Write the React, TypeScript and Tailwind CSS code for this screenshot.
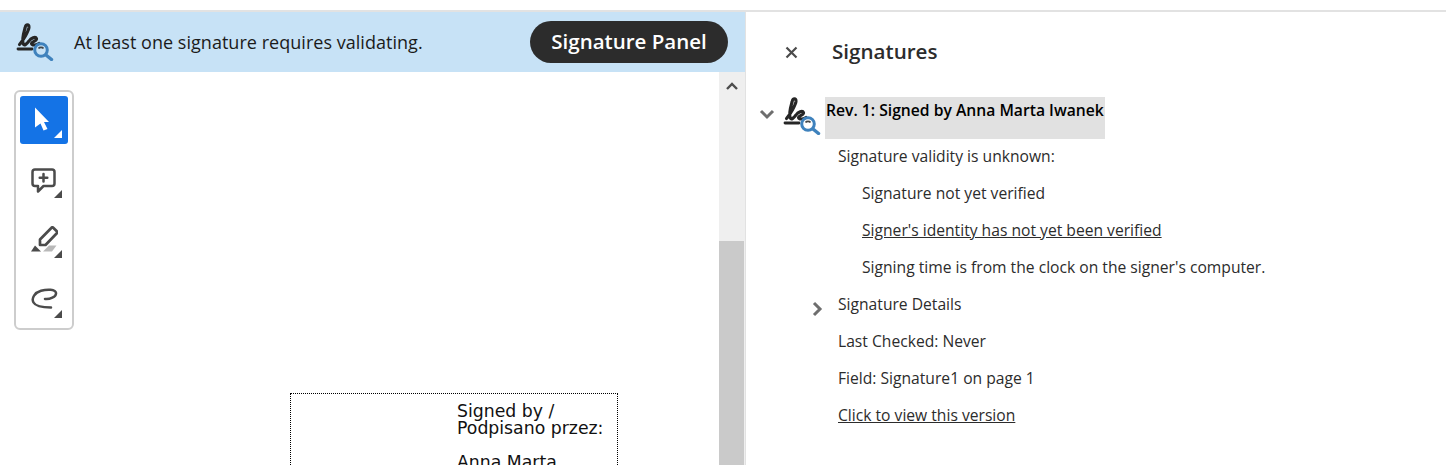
const SigIcon = ({ className }: { className: string }) => (
  <svg viewBox="0 0 38 38" className={className} fill="none">
    <path d="M3.500 21.500 C7.500 17 12.500 8 13 4.500 C13.300 0.800 9.800 0.800 9.200 4.500 C8 9 5.500 16 7.200 21 C8.200 23.500 11 20.500 13 18 C15 15 19.500 13 20.500 15.500 C21.300 18 16 18.500 15.500 20.500 C15.800 22.500 20 22.500 23 20.500" stroke="#262626" strokeWidth="3.100" strokeLinecap="round" strokeLinejoin="round" />
    <path d="M2 26 H16" stroke="#262626" strokeWidth="2.800" strokeLinecap="round" />
    <circle cx="25" cy="27" r="6.300" stroke="#3f82bd" strokeWidth="3" />
    <path d="M30 32 L35.500 36.500" stroke="#3f82bd" strokeWidth="3.400" strokeLinecap="round" />
    <path d="M22.500 25.500 C23.500 24 26.500 24 27.500 25.500" stroke="#444" strokeWidth="1.600" />
  </svg>
);

const Corner = ({ color }: { color: string }) => (
  <svg width="8" height="8" viewBox="0 0 8 8" className="absolute right-[6px] bottom-[6px]">
    <path d="M8 0V8H0Z" fill={color} />
  </svg>
);

const Tool = ({ active, children }: { active?: boolean; children: React.ReactNode }) => (
  <div className={`relative flex h-[48px] w-[48px] items-center justify-center rounded-[3px] ${active ? "bg-[#1473e6]" : ""}`}>
    {children}
    <Corner color={active ? "#ffffff" : "#4b4b4b"} />
  </div>
);

const Row = ({ children, className = "" }: { children: React.ReactNode; className?: string }) => (
  <div className={`flex h-[37px] items-center text-[15.650px] text-[#2c2c2c] ${className}`}>{children}</div>
);

export default function App() {
  return (
    <div className="flex h-[465px] w-[1446px] flex-col overflow-hidden bg-white font-['Open_Sans','Noto_Sans',sans-serif]">
      <div className="h-[10px] shrink-0" />
      <div className="h-[2px] shrink-0 bg-[#e2e2e2]" />
      <div className="flex min-h-0 flex-1">
        <div className="flex w-[745px] shrink-0 flex-col">
          <div className="flex h-[60px] shrink-0 items-center bg-[#c7e2f6] pl-[16px] pr-[17px]">
            <SigIcon className="h-[38px] w-[38px]" />
            <span className="ml-[20px] flex-1 text-[18px] tracking-[0.03px] text-[#1b1b1b]">At least one signature requires validating.</span>
            <div className="flex h-[42px] w-[198px] items-center justify-center rounded-full bg-[#2c2c2c] pb-[1px] text-[20.500px] font-semibold text-white">Signature Panel</div>
          </div>
          <div className="flex min-h-0 flex-1">
            <div className="relative min-w-0 flex-1 overflow-hidden pl-[14px] pt-[18px]">
              <div className="flex w-[60px] flex-col gap-[12px] rounded-[6px] border-2 border-[#cdcdcd] bg-white p-[4px]">
                <Tool active>
                  <svg width="16" height="24" viewBox="0 0 16 24" className="-ml-[4px] -mt-[2px]"><path d="M1 0.500 L15 15 H10 L13.500 22 L9.500 23.500 L6.500 16.500 L1 20.500Z" fill="#fff" /></svg>
                </Tool>
                <Tool>
                  <svg width="25" height="25" viewBox="0 0 25 25" fill="none" stroke="#4b4b4b" strokeWidth="2.500" strokeLinejoin="round" strokeLinecap="round" className="-ml-[1px]">
                    <path d="M4 1.500 H21 Q23.500 1.500 23.500 4 V15.500 Q23.500 18 21 18 H12.500 L7 23.500 V18 H4 Q1.500 18 1.500 15.500 V4 Q1.500 1.500 4 1.500Z" />
                    <path d="M12.500 6 V13.500 M8.700 9.700 H16.300" />
                  </svg>
                </Tool>
                <Tool>
                  <svg width="28" height="26" viewBox="0 0 28 26" fill="none" className="-ml-[1px] -mt-[2px]">
                    <path d="M23 1.500 L26.800 5.300 Q27.600 6.300 26.800 7.300 L15.500 19 H10 V13.500 L21.300 2 Q22.200 1 23 1.500Z" stroke="#4b4b4b" strokeWidth="2.700" strokeLinejoin="round" />
                    <path d="M1 25.500 L5 19.500 L11 25.500Z" fill="#4b4b4b" />
                    <path d="M13 25.500 L19 19.500 H26.500 L22 25.500Z" fill="#b9b9b9" />
                  </svg>
                </Tool>
                <Tool>
                  <svg width="27" height="21" viewBox="0 0 27 21" fill="none" stroke="#4b4b4b" strokeWidth="2.500" strokeLinecap="round" className="-mt-[4px]">
                    <path d="M20 19.500 C15 19.500 5 19 2.500 14.500 C0 10 4 4.500 10 2.800 C16 1 24.500 1 25 5 C25.500 9 18.500 11.500 14 11" />
                  </svg>
                </Tool>
              </div>
              <div className="absolute left-[290px] top-[321px] h-[200px] w-[328px] border border-dotted border-black pl-[166px] pt-[9px] font-['DejaVu_Sans',sans-serif] text-[17.300px] leading-[17px] text-[#111]">
                <div>Signed by /</div>
                <div>Podpisano przez:</div>
                <div className="mt-[17px]">Anna Marta</div>
              </div>
            </div>
            <div className="flex w-[26px] shrink-0 flex-col bg-[#efefef] pr-[1px]">
              <div className="flex h-[169px] items-start justify-center pt-[9px]">
                <svg width="14" height="10" viewBox="0 0 14 10" fill="none"><path d="M2 8 L7 3 L12 8" stroke="#4d4d4d" strokeWidth="2.400" /></svg>
              </div>
              <div className="flex-1 bg-[#cacaca]" />
            </div>
          </div>
        </div>
        <div className="w-[1px] shrink-0 bg-[#e2e2e2]" />
        <div className="flex min-w-0 flex-1 flex-col">
          <div className="flex h-[80px] shrink-0 items-center pl-[39px]">
            <svg width="13" height="13" viewBox="0 0 13 13"><path d="M1.500 1.500 L11.500 11.500 M11.500 1.500 L1.500 11.500" stroke="#4b4b4b" strokeWidth="2.200" /></svg>
            <span className="ml-[34px] pb-[2px] text-[20.600px] font-semibold text-[#2c2c2c]">Signatures</span>
          </div>
          <div className="mt-[5px] flex h-[42px] shrink-0">
            <div className="flex h-[34px] w-[37px] shrink-0 items-center justify-end">
              <svg width="16" height="11" viewBox="0 0 16 11" fill="none" className="mr-[8px]"><path d="M2 2 L8 8 L14 2" stroke="#6e6e6e" strokeWidth="3" /></svg>
            </div>
            <SigIcon className="h-[38px] w-[38px] shrink-0" />
            <div className="ml-[4px] h-[42px] w-[280px] whitespace-nowrap bg-[#e1e1e1] pl-[1px] pt-[2px] text-[15.700px] font-semibold leading-[22px] text-black">Rev. 1: Signed by Anna Marta Iwanek</div>
          </div>
          <div className="-mt-[1px] pl-[92px]">
            <Row>Signature validity is unknown:</Row>
            <Row className="pl-[24px]">Signature not yet verified</Row>
            <Row className="pl-[24px] underline">Signer's identity has not yet been verified</Row>
            <Row className="pl-[24px]">Signing time is from the clock on the signer's computer.</Row>
            <Row className="relative">
              <svg width="11" height="16" viewBox="0 0 11 16" fill="none" className="absolute -left-[26px] top-[15px]"><path d="M2 2 L8 8 L2 14" stroke="#6e6e6e" strokeWidth="3" /></svg>
              Signature Details
            </Row>
            <Row>Last Checked: Never</Row>
            <Row>Field: Signature1 on page 1</Row>
            <Row className="underline">Click to view this version</Row>
          </div>
        </div>
      </div>
    </div>
  );
}
